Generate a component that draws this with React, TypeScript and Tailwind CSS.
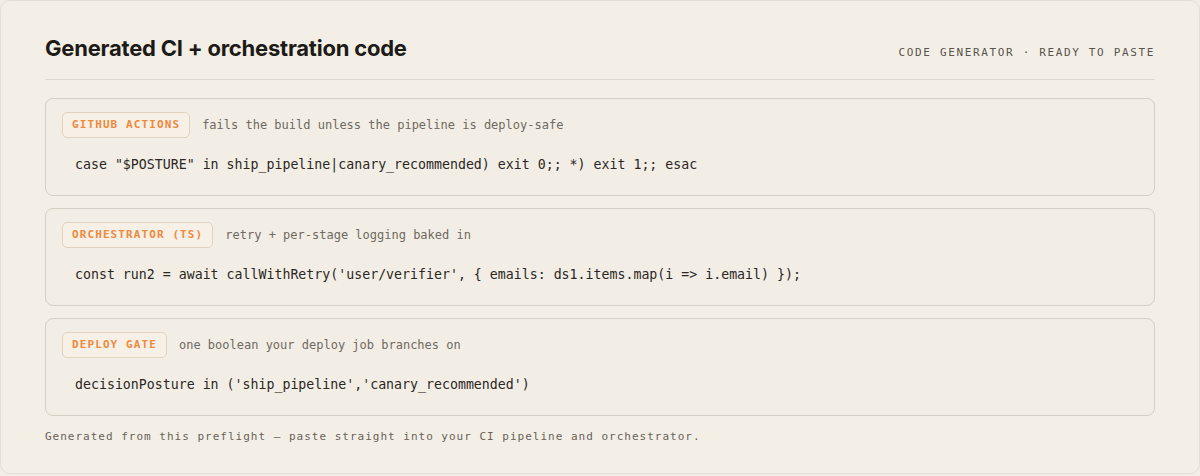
import type { FC } from "react";

interface Snippet {
  label: string;
  note: string;
  code: string;
}

const snippets: Snippet[] = [
  {
    label: "GITHUB ACTIONS",
    note: "fails the build unless the pipeline is deploy-safe",
    code: 'case "$POSTURE" in ship_pipeline|canary_recommended) exit 0;; *) exit 1;; esac',
  },
  {
    label: "ORCHESTRATOR (TS)",
    note: "retry + per-stage logging baked in",
    code: "const run2 = await callWithRetry('user/verifier', { emails: ds1.items.map(i => i.email) });",
  },
  {
    label: "DEPLOY GATE",
    note: "one boolean your deploy job branches on",
    code: "decisionPosture in ('ship_pipeline','canary_recommended')",
  },
];

const mono = "font-['DejaVu_Sans_Mono','Liberation_Mono',monospace]";

const SnippetCard: FC<Snippet> = ({ label, note, code }) => (
  <div className="rounded-[8px] border border-[#d6cfc3] bg-[#f3eee5] px-[16px] pt-[13px] pb-[20px]">
    <div className="flex h-[26px] items-center gap-[12px]">
      <span
        className={`${mono} flex h-[26px] items-center rounded-[5px] border border-[#e2d3c0] bg-[#f6f0e7] px-[9px] text-[11px] font-bold tracking-[0.1em] text-[#ee8a3d]`}
      >
        {label}
      </span>
      <span className={`${mono} text-[12px] text-[#6e6962]`}>{note}</span>
    </div>
    <pre
      className={`${mono} mt-[17px] pl-[13px] text-[13.25px] leading-[20px] text-[#2a2724]`}
    >
      {code}
    </pre>
  </div>
);

export default function App() {
  return (
    <div className="h-[476px] w-[1200px] bg-[#f3eee5]">
      <div className="h-[474px] rounded-[10px] border border-[#e4ddd1] bg-[#f4efe6] px-[44px] pt-[33px]">
        <div className="flex items-baseline justify-between border-b border-[#ddd6ca] pb-[16px]">
          <h2 className="font-['Inter',sans-serif] text-[22px] leading-[29px] font-bold tracking-[-0.01em] text-[#1d1b18]">
            Generated CI + orchestration code
          </h2>
          <span className={`${mono} text-[11px] tracking-[0.15em] text-[#57534d]`}>
            CODE GENERATOR · READY TO PASTE
          </span>
        </div>
        <div className="mt-[18px] flex flex-col gap-[12px]">
          {snippets.map((snippet) => (
            <SnippetCard key={snippet.label} {...snippet} />
          ))}
        </div>
        <p className={`${mono} mt-[13px] text-[11px] tracking-[1px] text-[#67625b]`}>
          Generated from this preflight — paste straight into your CI pipeline and orchestrator.
        </p>
      </div>
    </div>
  );
}
